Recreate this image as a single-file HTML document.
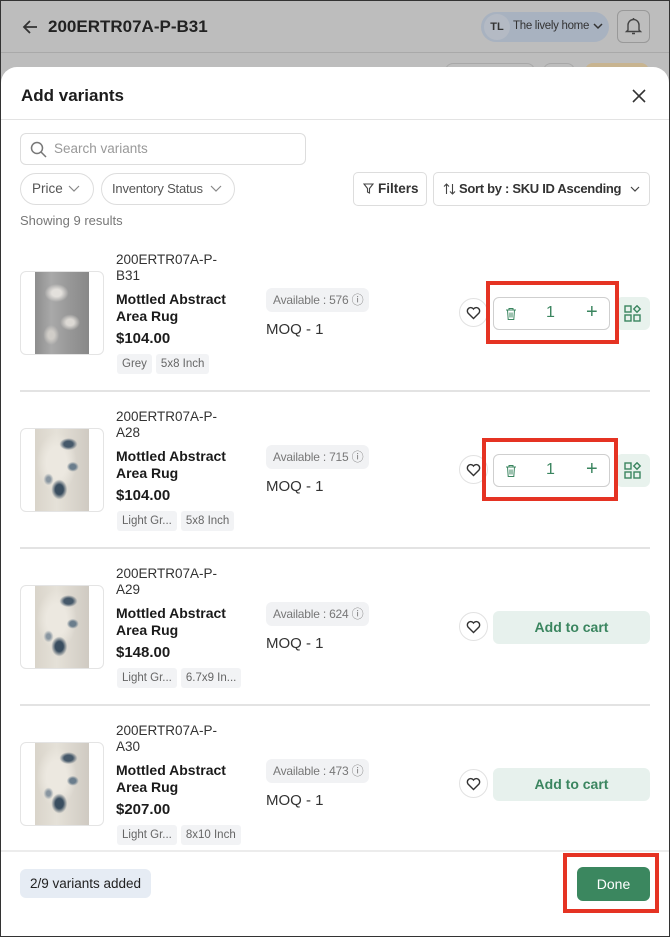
<!DOCTYPE html>
<html><head><meta charset="utf-8"><style>
*{box-sizing:border-box;margin:0;padding:0}
body{width:670px;height:937px;overflow:hidden;font-family:"Liberation Sans",sans-serif;color:#1c1c1c;background:#bdbdbd;position:relative}
.frame{position:absolute;inset:0;border:1px solid #333;z-index:50;pointer-events:none}
.topbar{position:absolute;left:0;top:0;width:670px;height:53px;border-bottom:1px solid #a9a9a9}
.abs{position:absolute;white-space:nowrap}
.modal{position:absolute;left:1px;top:67px;width:668px;height:869px;background:#fff;border-radius:16px 16px 0 0;overflow:hidden}
.row{position:absolute;left:0;width:668px;height:157px}
.row .div{position:absolute;left:19px;right:19px;bottom:0;height:2px;background:#e3e3e3}
.img{position:absolute;left:19px;top:36px;width:84px;height:84px;border:1px solid #e4e4e4;border-radius:6px;overflow:hidden;background:#fff}
.rug{position:absolute;left:14px;top:0;width:54px;height:84px}
.sku{position:absolute;left:115px;top:17px;font-size:13.5px;line-height:16px;color:#333}
.name{position:absolute;left:115px;top:56px;font-size:14px;line-height:17px;font-weight:bold;color:#1a1a1a}
.price{position:absolute;left:115px;top:95px;font-size:15px;font-weight:bold}
.tags{position:absolute;left:116px;top:119px;display:flex;gap:4px}
.tag{background:#f2f3f5;border-radius:3px;font-size:11.5px;color:#666;height:20px;line-height:20px;padding:0 5px;white-space:nowrap}
.avail{position:absolute;left:265px;top:53px;height:24px;width:103px;background:#f1f2f4;border-radius:6px;font-size:12px;color:#777;line-height:24px;padding-left:7px;white-space:nowrap;letter-spacing:-0.2px}
.moq{position:absolute;left:265px;top:86px;font-size:15px;color:#333}
.heart{position:absolute;left:458px;top:63px;width:29px;height:29px;border:1px solid #e2e2e2;border-radius:50%;display:flex;align-items:center;justify-content:center}
.qty{position:absolute;left:492px;top:62px;width:117px;height:33px;border:1px solid #cfcfcf;border-radius:6px}
.grid{position:absolute;left:615px;top:62px;width:34px;height:33px;background:#e8f2ed;border-radius:6px;display:flex;align-items:center;justify-content:center}
.atc{position:absolute;left:492px;top:62px;width:157px;height:33px;background:#e7f1ed;border-radius:6px;color:#3a855f;font-weight:bold;font-size:14px;text-align:center;line-height:33px}
.red{position:absolute;border:4px solid #e53323}
.blue{background:radial-gradient(ellipse 9px 6px at 62% 18%,#46596a 0 50%,transparent 100%),radial-gradient(ellipse 8px 10px at 45% 72%,#3a4e60 0 50%,transparent 100%),radial-gradient(ellipse 6px 5px at 70% 45%,#6a7d8c 0 50%,transparent 100%),radial-gradient(ellipse 5px 6px at 25% 60%,#8895a0 0 40%,transparent 100%),radial-gradient(ellipse 20px 30px at 40% 40%,#ece8e0 0 50%,transparent 100%),linear-gradient(90deg,#d9d4ca,#e5e1d8 40%,#cfcac2)}
</style></head><body>
<div class="frame"></div>
<div class="topbar">
 <svg class="abs" style="left:21px;top:19px" width="18" height="16" viewBox="0 0 18 16"><path d="M16 8H3M9 2L3 8l6 6" fill="none" stroke="#333" stroke-width="1.8"/></svg>
 <div class="abs" style="left:48px;top:17px;font-size:17px;font-weight:bold;color:#222">200ERTR07A-P-B31</div>
 <div class="abs" style="left:481px;top:12px;width:128px;height:30px;border-radius:15px;background:#a8b2c0"></div>
 <div class="abs" style="left:484px;top:14px;width:26px;height:26px;border-radius:50%;background:#b4bac4;font-size:11px;font-weight:bold;text-align:center;line-height:26px;color:#333">TL</div>
 <div class="abs" style="left:513px;top:20px;font-size:11.5px;letter-spacing:-0.3px;color:#333">The lively home</div>
 <svg class="abs" style="left:593px;top:22px" width="10" height="8"><path d="M1 2l4 4 4-4" fill="none" stroke="#333" stroke-width="1.5"/></svg>
 <div class="abs" style="left:617px;top:10px;width:33px;height:33px;border:1px solid #999;border-radius:6px"></div>
 <svg class="abs" style="left:624px;top:16px" width="19" height="20" viewBox="0 0 19 20"><path d="M4 14V9a5.5 5.5 0 0 1 11 0v5l1.5 1.5h-14zM8 17.5h3M9.5 2v1.5" fill="none" stroke="#444" stroke-width="1.4"/></svg>
 <div class="abs" style="left:445px;top:63px;width:90px;height:10px;border:1px solid #a8a8a8;border-bottom:none;border-radius:8px 8px 0 0"></div>
 <div class="abs" style="left:543px;top:63px;width:32px;height:10px;border:1px solid #a8a8a8;border-bottom:none;border-radius:8px 8px 0 0"></div>
 <div class="abs" style="left:585px;top:63px;width:64px;height:10px;background:#c8b490;border-radius:8px 8px 0 0"></div>
</div>
<div class="modal">
 <div class="abs" style="left:20px;top:19px;font-size:17px;font-weight:bold">Add variants</div>
 <svg class="abs" style="left:630px;top:21px" width="16" height="16"><path d="M2 2l12 12M14 2L2 14" stroke="#333" stroke-width="1.6"/></svg>
 <div class="abs" style="left:0;top:52px;width:668px;height:1px;background:#e3e3e3"></div>
 <div class="abs" style="left:19px;top:66px;width:286px;height:32px;border:1px solid #ddd;border-radius:6px"></div>
 <svg class="abs" style="left:29px;top:74px" width="17" height="17"><circle cx="7" cy="7" r="5.5" fill="none" stroke="#777" stroke-width="1.5"/><path d="M11 11l5 5" stroke="#777" stroke-width="1.5"/></svg>
 <div class="abs" style="left:53px;top:74px;font-size:13.5px;color:#999">Search variants</div>
 <div class="abs" style="left:19px;top:106px;width:74px;height:32px;border:1px solid #ddd;border-radius:16px;font-size:13.5px;color:#555;line-height:30px;padding-left:11px">Price</div>
 <svg class="abs" style="left:67px;top:118px" width="12" height="8"><path d="M1 1l5 5 5-5" fill="none" stroke="#888" stroke-width="1.2"/></svg>
 <div class="abs" style="left:100px;top:106px;width:134px;height:32px;border:1px solid #ddd;border-radius:16px;font-size:13px;letter-spacing:-0.2px;color:#555;line-height:30px;padding-left:10px">Inventory Status</div>
 <svg class="abs" style="left:209px;top:118px" width="12" height="8"><path d="M1 1l5 5 5-5" fill="none" stroke="#888" stroke-width="1.2"/></svg>
 <div class="abs" style="left:352px;top:105px;width:74px;height:34px;border:1px solid #ddd;border-radius:5px;font-size:13.5px;font-weight:bold;line-height:32px;padding-left:24px;color:#333">Filters</div>
 <svg class="abs" style="left:362px;top:116px" width="11" height="11"><path d="M1 1h9L6.5 5.5V10L4.5 9V5.5z" fill="none" stroke="#444" stroke-width="1.1"/></svg>
 <div class="abs" style="left:432px;top:105px;width:217px;height:34px;border:1px solid #ddd;border-radius:5px;font-size:13px;letter-spacing:-0.3px;font-weight:bold;line-height:32px;padding-left:25px;color:#333">Sort by : SKU ID Ascending</div>
 <svg class="abs" style="left:442px;top:116px" width="13" height="12"><path d="M3.5 11V1M1 3.5L3.5 1 6 3.5M9.5 1v10M7 8.5l2.5 2.5L12 8.5" fill="none" stroke="#444" stroke-width="1.1"/></svg>
 <svg class="abs" style="left:629px;top:119px" width="10" height="7"><path d="M1 1l4 4 4-4" fill="none" stroke="#444" stroke-width="1.2"/></svg>
 <div class="abs" style="left:19px;top:146px;font-size:13px;color:#777">Showing 9 results</div>

 <div class="row" style="top:168px">
  <div class="img"><div class="rug" style="background:radial-gradient(ellipse 12px 9px at 40% 25%,#e3e0dc 0 40%,transparent 100%),radial-gradient(ellipse 10px 8px at 65% 60%,#dcd9d4 0 40%,transparent 100%),radial-gradient(ellipse 8px 10px at 30% 75%,#d0cdc8 0 40%,transparent 100%),linear-gradient(90deg,#8d8d8d,#a9a9a9 30%,#999 60%,#888)"></div></div>
  <div class="sku">200ERTR07A-P-<br>B31</div>
  <div class="name">Mottled Abstract<br>Area Rug</div>
  <div class="price">$104.00</div>
  <div class="tags"><span class="tag">Grey</span><span class="tag">5x8 Inch</span></div>
  <div class="avail">Available : 576 ⓘ</div>
  <div class="moq">MOQ - 1</div>
  <div class="heart"><svg width="15" height="14" viewBox="0 0 15 14"><path d="M7.5 12.5L2 7a3.2 3.2 0 0 1 5.5-4 3.2 3.2 0 0 1 5.5 4z" fill="none" stroke="#333" stroke-width="1.4"/></svg></div>
  <div class="qty">
   <svg class="abs" style="left:11px;top:9px" width="12" height="14"><path d="M1 3h10M4 3V1.5h4V3M2.5 3l.7 9.5h5.6L9.5 3M5 5.5v5M7 5.5v5" fill="none" stroke="#3a855f" stroke-width="1"/></svg>
   <div class="abs" style="left:52px;top:6px;font-size:16px;color:#3a855f">1</div>
   <div class="abs" style="left:92px;top:3px;font-size:20px;color:#3a855f">+</div>
  </div>
  <div class="grid"><svg width="18" height="18" viewBox="0 0 18 18" fill="none" stroke="#3a855f" stroke-width="1.4"><rect x="1" y="1" width="6" height="6"/><rect x="1" y="10" width="6" height="6"/><rect x="10" y="10" width="6" height="6"/><path d="M13 0.8l3.2 3.2L13 7.2 9.8 4z"/></svg></div>
  <div class="div"></div>
 </div>
 <div class="row" style="top:325px">
  <div class="img"><div class="rug blue"></div></div>
  <div class="sku">200ERTR07A-P-<br>A28</div>
  <div class="name">Mottled Abstract<br>Area Rug</div>
  <div class="price">$104.00</div>
  <div class="tags"><span class="tag">Light Gr...</span><span class="tag">5x8 Inch</span></div>
  <div class="avail">Available : 715 ⓘ</div>
  <div class="moq">MOQ - 1</div>
  <div class="heart"><svg width="15" height="14" viewBox="0 0 15 14"><path d="M7.5 12.5L2 7a3.2 3.2 0 0 1 5.5-4 3.2 3.2 0 0 1 5.5 4z" fill="none" stroke="#333" stroke-width="1.4"/></svg></div>
  <div class="qty">
   <svg class="abs" style="left:11px;top:9px" width="12" height="14"><path d="M1 3h10M4 3V1.5h4V3M2.5 3l.7 9.5h5.6L9.5 3M5 5.5v5M7 5.5v5" fill="none" stroke="#3a855f" stroke-width="1"/></svg>
   <div class="abs" style="left:52px;top:6px;font-size:16px;color:#3a855f">1</div>
   <div class="abs" style="left:92px;top:3px;font-size:20px;color:#3a855f">+</div>
  </div>
  <div class="grid"><svg width="18" height="18" viewBox="0 0 18 18" fill="none" stroke="#3a855f" stroke-width="1.4"><rect x="1" y="1" width="6" height="6"/><rect x="1" y="10" width="6" height="6"/><rect x="10" y="10" width="6" height="6"/><path d="M13 0.8l3.2 3.2L13 7.2 9.8 4z"/></svg></div>
  <div class="div"></div>
 </div>
 <div class="row" style="top:482px">
  <div class="img"><div class="rug blue"></div></div>
  <div class="sku">200ERTR07A-P-<br>A29</div>
  <div class="name">Mottled Abstract<br>Area Rug</div>
  <div class="price">$148.00</div>
  <div class="tags"><span class="tag">Light Gr...</span><span class="tag">6.7x9 In...</span></div>
  <div class="avail">Available : 624 ⓘ</div>
  <div class="moq">MOQ - 1</div>
  <div class="heart"><svg width="15" height="14" viewBox="0 0 15 14"><path d="M7.5 12.5L2 7a3.2 3.2 0 0 1 5.5-4 3.2 3.2 0 0 1 5.5 4z" fill="none" stroke="#333" stroke-width="1.4"/></svg></div>
  <div class="atc">Add to cart</div>
  <div class="div"></div>
 </div>
 <div class="row" style="top:639px">
  <div class="img"><div class="rug blue"></div></div>
  <div class="sku">200ERTR07A-P-<br>A30</div>
  <div class="name">Mottled Abstract<br>Area Rug</div>
  <div class="price">$207.00</div>
  <div class="tags"><span class="tag">Light Gr...</span><span class="tag">8x10 Inch</span></div>
  <div class="avail">Available : 473 ⓘ</div>
  <div class="moq">MOQ - 1</div>
  <div class="heart"><svg width="15" height="14" viewBox="0 0 15 14"><path d="M7.5 12.5L2 7a3.2 3.2 0 0 1 5.5-4 3.2 3.2 0 0 1 5.5 4z" fill="none" stroke="#333" stroke-width="1.4"/></svg></div>
  <div class="atc">Add to cart</div>
 </div>

 <div class="abs" style="left:0;top:783px;width:668px;height:86px;background:#fff;border-top:2px solid #ececec"></div>
 <div class="abs" style="left:19px;top:802px;width:131px;height:29px;background:#e6ecf4;border-radius:6px;font-size:13.5px;line-height:29px;text-align:center;color:#222">2/9 variants added</div>
 <div class="abs" style="left:576px;top:800px;width:73px;height:34px;background:#3b875f;border-radius:6px;color:#fff;font-size:14px;line-height:34px;text-align:center">Done</div>
</div>
<div class="red" style="left:486px;top:281px;width:133px;height:63px"></div>
<div class="red" style="left:482px;top:438px;width:136px;height:63px"></div>
<div class="red" style="left:563px;top:853px;width:96px;height:60px"></div>
</body></html>
